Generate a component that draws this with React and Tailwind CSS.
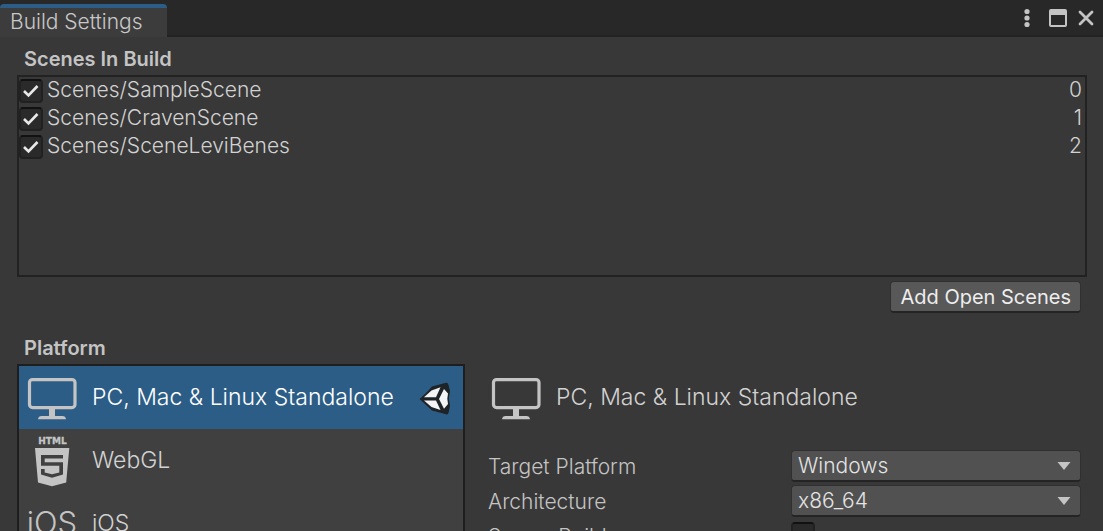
import React, { useState } from "react";

const scenes = ["Scenes/SampleScene", "Scenes/CravenScene", "Scenes/SceneLeviBenes"];

function MonitorIcon() {
  return (
    <svg width="50" height="46" viewBox="0 0 50 46" aria-hidden="true" className="shrink-0">
      <rect x="2.500" y="4.600" width="45.500" height="28" rx="3" fill="none" stroke="#c4c4c4" strokeWidth="3.200" />
      <path d="M22 33h6v8h7.500q3 0 3.500 3.200H11q.5-3.200 3.500-3.200h7.500z" fill="#c4c4c4" />
    </svg>
  );
}

function Html5Icon() {
  return (
    <svg width="50" height="54" viewBox="0 0 50 54" aria-hidden="true" className="shrink-0">
      <text
        x="25.500"
        y="10"
        textAnchor="middle"
        fill="#c4c4c4"
        stroke="#c4c4c4"
        strokeWidth="0.300"
        className="font-['DejaVu_Sans',sans-serif] text-[9px] font-bold"
      >
        HTML
      </text>
      <path
        fillRule="evenodd"
        fill="#c4c4c4"
        d="M8 14H42.300L39.200 48.600L25 52.300L11 48.600zM14 21V31.700H32.300V38.400L25 40.300L17.700 38.400V35H14V40.600L25 43.800L36 40.600V28.200H17.700V24.600H36V21z"
      />
    </svg>
  );
}

function IosIcon() {
  return (
    <svg width="50" height="40" viewBox="0 0 50 40" aria-hidden="true" className="shrink-0">
      <text x="25" y="30" textAnchor="middle" fill="#c4c4c4" className="font-[Inter,sans-serif] text-[31px] font-light">
        iOS
      </text>
    </svg>
  );
}

function UnityIcon() {
  return (
    <svg width="32" height="36" viewBox="0 0 32 36" aria-hidden="true" className="shrink-0">
      <g transform="translate(0 2)">
        <path
          d="M0.500 17L7 11L13 4.500L27 .8Q29 .5 29.500 3L31 9L29.800 16.500L31 24L29.500 31Q29 33 27 32.300L13 28.500L7 23z"
          fill="#1d2327"
        />
        <path d="M5 15.300L12.500 8.500L21.500 5.200L17 15.300z" fill="#f4f4f4" />
        <path d="M5 18.600H17L21.500 28L12.500 25z" fill="#f4f4f4" />
        <path d="M25 7L29 11.500L28.300 16.800L29 22L25 26.800L20 17z" fill="#f4f4f4" />
      </g>
    </svg>
  );
}

function CheckBox({ defaultChecked, id }) {
  return (
    <span className="relative flex h-6 w-6 shrink-0">
      <input
        id={id}
        type="checkbox"
        defaultChecked={defaultChecked}
        className="peer h-6 w-6 appearance-none rounded border-2 border-[#212121] border-t-[#111111] bg-[#2a2a2a]"
      />
      <svg
        viewBox="0 0 24 24"
        aria-hidden="true"
        className="pointer-events-none absolute inset-0 hidden h-6 w-6 peer-checked:block"
      >
        <path d="M5 12L9.500 16.500L18.500 7" fill="none" stroke="#e8e8e8" strokeWidth="2.600" />
      </svg>
    </span>
  );
}

function Field({ id, label, children }) {
  return (
    <div className="flex h-8 items-start">
      <label htmlFor={id} className="w-[303px] shrink-0 pt-[3px] text-[#c4c4c4]">
        {label}
      </label>
      {children}
    </div>
  );
}

function DropDown({ id, options }) {
  return (
    <span className="relative flex min-w-0 flex-1">
      <select
        id={id}
        className="h-8 w-full appearance-none rounded border border-[#303030] border-b-2 border-b-[#242424] bg-[#515151] pl-1.5 pr-8 text-[#e4e4e4]"
      >
        {options.map((o) => (
          <option key={o}>{o}</option>
        ))}
      </select>
      <svg width="14" height="8" viewBox="0 0 14 8" aria-hidden="true" className="pointer-events-none absolute right-2.5 top-3">
        <path d="M.5 0h13L7 8z" fill="#c4c4c4" />
      </svg>
    </span>
  );
}

const platforms = [
  { name: "PC, Mac & Linux Standalone", Icon: MonitorIcon, current: true },
  { name: "WebGL", Icon: Html5Icon },
  { name: "iOS", Icon: IosIcon },
];

export default function App() {
  const [selected, setSelected] = useState(platforms[0].name);
  return (
    <div className="flex h-screen flex-col overflow-hidden bg-[#383838] font-[Inter,sans-serif] text-[21px] font-[350] leading-7 text-[#d2d2d2]">
      <header className="flex h-[37px] shrink-0 items-stretch justify-between bg-[#282828] pt-1">
        <div className="w-[167px] rounded-t border-t-4 border-[#2c5d87] bg-[#3c3c3c] pl-2.5 text-[#c8c8c8]">
          Build Settings
        </div>
        <div className="flex flex-1 items-start justify-end gap-2 border-b-2 border-[#232323] pr-2 pt-1">
          <button aria-label="Menu" className="flex w-7 justify-center">
            <svg width="6" height="20" viewBox="0 0 6 20" fill="#c4c4c4">
              <circle cx="3" cy="3.500" r="2.600" />
              <circle cx="3" cy="10" r="2.600" />
              <circle cx="3" cy="16.500" r="2.600" />
            </svg>
          </button>
          <button aria-label="Maximize">
            <svg width="20" height="20" viewBox="0 0 20 20">
              <path fillRule="evenodd" fill="#c4c4c4" d="M2 1H16Q18 1 18 3V17Q18 19 16 19H2Q0 19 0 17V3Q0 1 2 1zM2 7V17H16V7z" />
            </svg>
          </button>
          <button aria-label="Close">
            <svg width="18" height="20" viewBox="0 0 18 20">
              <path d="M3 4L15 16M15 4L3 16" stroke="#c4c4c4" strokeWidth="2.800" strokeLinecap="round" />
            </svg>
          </button>
        </div>
      </header>

      <main className="flex min-h-0 flex-1 flex-col pl-[17px] pr-4 pt-2">
        <h2 className="pl-[7px] text-xl leading-7 font-semibold text-[#c4c4c4]">Scenes In Build</h2>
        <ul className="mt-0.5 h-[202px] shrink-0 border-2 border-[#222222]">
          {scenes.map((scene, i) => (
            <li key={scene} className="flex h-7 items-start pr-[3px] leading-[26px]">
              <span className="flex pt-0.5">
                <CheckBox id={"scene-" + i} defaultChecked />
              </span>
              <label htmlFor={"scene-" + i} className="flex-1 pl-1">
                {scene}
              </label>
              <span>{i}</span>
            </li>
          ))}
        </ul>
        <div className="mt-1 flex justify-end pr-1.5">
          <button className="h-8 rounded border border-[#303030] border-b-2 border-b-[#242424] bg-[#585858] px-[9px] text-xl leading-7 font-normal text-[#eeeeee]">
            Add Open Scenes
          </button>
        </div>

        <h2 className="mt-[21px] pl-[7px] text-xl leading-7 font-semibold text-[#c4c4c4]">Platform</h2>
        <div className="mt-0.5 flex min-h-0 flex-1">
          <ul className="w-[448px] shrink-0 overflow-hidden border-2 border-b-0 border-[#1e1e1e] bg-[#404040]">
            {platforms.map(({ name, Icon, current }) => (
              <li key={name}>
                <button
                  onClick={() => setSelected(name)}
                  aria-pressed={selected === name}
                  className={
                    "flex h-[63px] w-full items-center pl-2 pr-3 text-left text-[23px] " +
                    (selected === name ? "bg-[#2c5d87] text-white" : "text-[#d2d2d2]")
                  }
                >
                  <Icon />
                  <span className="flex-1 pb-0.5 pl-[15px]">{name}</span>
                  {current && <UnityIcon />}
                </button>
              </li>
            ))}
          </ul>
          <section className="min-w-0 flex-1 overflow-hidden pl-[23px] pr-1.5">
            <h3 className="flex h-[67px] items-center pl-[3px] text-[23px] font-[350]">
              <MonitorIcon />
              <span className="pb-0.5 pl-[15px]">{platforms[0].name}</span>
            </h3>
            <div className="mt-[19px] flex flex-col gap-[3px]">
              <Field id="target" label="Target Platform">
                <DropDown id="target" options={["Windows", "Mac OS X", "Linux"]} />
              </Field>
              <Field id="arch" label="Architecture">
                <DropDown id="arch" options={["x86_64", "x86"]} />
              </Field>
              <Field id="server" label="Server Build">
                <span className="pt-0.5">
                  <CheckBox id="server" />
                </span>
              </Field>
            </div>
          </section>
        </div>
      </main>
    </div>
  );
}
